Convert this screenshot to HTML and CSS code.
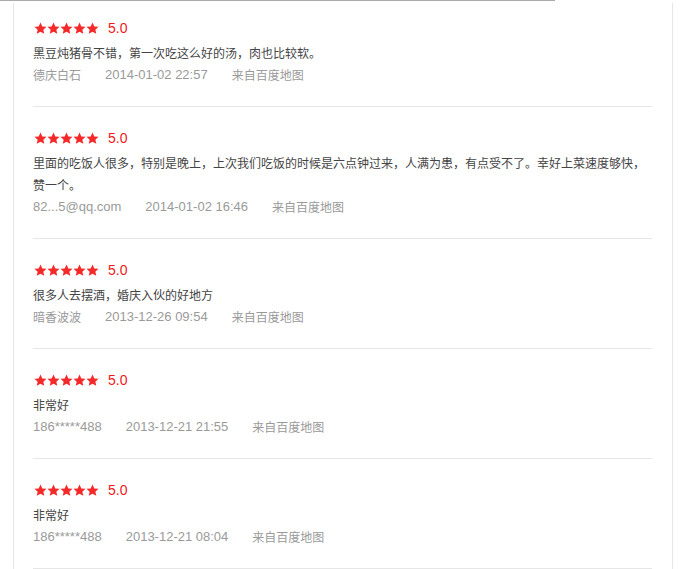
FILE: index.html
```html
<!DOCTYPE html>
<html lang="zh-CN">
<head>
<meta charset="utf-8">
<title>评论</title>
<link rel="stylesheet" href="styles.css">
</head>
<body>
<div class="topbar"></div>
<div class="panel">
  <ul class="reviews">
    <li class="review">
      <div class="rating">
        <span class="stars"><svg viewBox="0 0 65 13" width="65" height="13"><defs><path id="s" d="M6.5 0.5l1.8 3.95 4.2.4-3.15 2.85.92 4.15L6.5 9.75 2.73 11.85l.92-4.15L.5 4.85l4.2-.4z"/></defs><use href="#s" x="0"/><use href="#s" x="13"/><use href="#s" x="26"/><use href="#s" x="39"/><use href="#s" x="52"/></svg></span>
        <span class="score">5.0</span>
      </div>
      <p class="text">黑豆炖猪骨不错，第一次吃这么好的汤，肉也比较软。</p>
      <div class="meta"><span>德庆白石</span><span class="lat">2014-01-02 22:57</span><span>来自百度地图</span></div>
    </li>
    <li class="review">
      <div class="rating">
        <span class="stars"><svg viewBox="0 0 65 13" width="65" height="13"><use href="#s" x="0"/><use href="#s" x="13"/><use href="#s" x="26"/><use href="#s" x="39"/><use href="#s" x="52"/></svg></span>
        <span class="score">5.0</span>
      </div>
      <p class="text">里面的吃饭人很多，特别是晚上，上次我们吃饭的时候是六点钟过来，人满为患，有点受不了。幸好上菜速度够快，赞一个。</p>
      <div class="meta"><span class="lat">82...5@qq.com</span><span class="lat">2014-01-02 16:46</span><span>来自百度地图</span></div>
    </li>
    <li class="review">
      <div class="rating">
        <span class="stars"><svg viewBox="0 0 65 13" width="65" height="13"><use href="#s" x="0"/><use href="#s" x="13"/><use href="#s" x="26"/><use href="#s" x="39"/><use href="#s" x="52"/></svg></span>
        <span class="score">5.0</span>
      </div>
      <p class="text">很多人去摆酒，婚庆入伙的好地方</p>
      <div class="meta"><span>暗香波波</span><span class="lat">2013-12-26 09:54</span><span>来自百度地图</span></div>
    </li>
    <li class="review">
      <div class="rating">
        <span class="stars"><svg viewBox="0 0 65 13" width="65" height="13"><use href="#s" x="0"/><use href="#s" x="13"/><use href="#s" x="26"/><use href="#s" x="39"/><use href="#s" x="52"/></svg></span>
        <span class="score">5.0</span>
      </div>
      <p class="text">非常好</p>
      <div class="meta"><span class="lat">186*****488</span><span class="lat">2013-12-21 21:55</span><span>来自百度地图</span></div>
    </li>
    <li class="review">
      <div class="rating">
        <span class="stars"><svg viewBox="0 0 65 13" width="65" height="13"><use href="#s" x="0"/><use href="#s" x="13"/><use href="#s" x="26"/><use href="#s" x="39"/><use href="#s" x="52"/></svg></span>
        <span class="score">5.0</span>
      </div>
      <p class="text">非常好</p>
      <div class="meta"><span class="lat">186*****488</span><span class="lat">2013-12-21 08:04</span><span>来自百度地图</span></div>
    </li>
  </ul>
</div>
</body>
</html>
```

FILE: styles.css
```css
html, body {
  margin: 0;
  padding: 0;
  background: #fff;
}
body {
  font-family: "Liberation Sans", "Noto Sans CJK SC", sans-serif;
  font-size: 12px;
  height: 569px;
  overflow: hidden;
}
.topbar {
  width: 555px;
  height: 1px;
  background: #ababab;
  margin-bottom: 2px;
}
.panel {
  margin-left: 13px;
  width: 619px;
  height: 566px;
  overflow: hidden;
  border-left: 1px solid #e6e6e6;
  border-right: 1px solid #e6e6e6;
  padding: 0 20px 0 19px;
}
.reviews {
  list-style: none;
  margin: 0;
  padding: 0;
}
.review {
  padding: 20px 0 21px;
  border-bottom: 1px solid #e6e6e6;
}
.review:first-child {
  padding-top: 14px;
}
.rating {
  display: flex;
  align-items: center;
  height: 22px;
  gap: 9px;
}
.stars {
  display: flex;
  align-items: center;
  margin-left: 1px;
}
.stars svg {
  fill: #f42a2a;
  display: block;
}
.score {
  color: #f01818;
  font-size: 14px;
  line-height: 22px;
}
.text {
  margin: 3px 0 0;
  color: #444;
  line-height: 22px;
  font-family: "Noto Sans CJK SC", sans-serif;
}
.meta {
  display: flex;
  gap: 24px;
  color: #9a9a9a;
  line-height: 22px;
  margin-bottom: -1px;
  font-family: "Noto Sans CJK SC", sans-serif;
}
.meta .lat {
  font-family: "Liberation Sans", sans-serif;
  font-size: 13px;
}
```
